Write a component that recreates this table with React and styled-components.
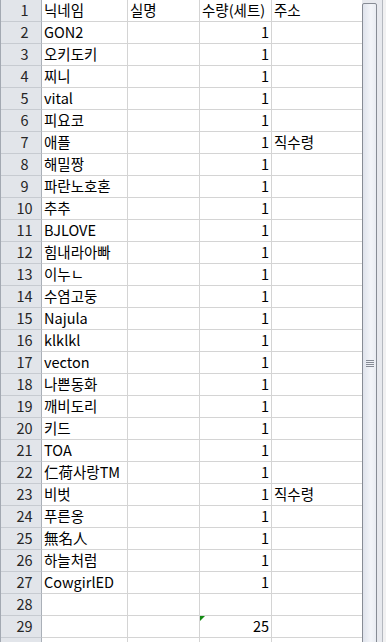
import React from "react";
import styled, { createGlobalStyle } from "styled-components";

const GlobalStyle = createGlobalStyle`
  html, body {
    margin: 0;
    padding: 0;
    background: #fff;
  }
  body {
    font-family: "Noto Sans CJK KR", "Noto Sans", sans-serif;
  }
`;

const Window = styled.div`
  display: flex;
  width: 386px;
  height: 642px;
  overflow: hidden;
`;

const Sheet = styled.div`
  width: 362px;
  height: 642px;
  overflow: hidden;
  border-left: 1px solid #a3a9b2;
  box-sizing: border-box;
`;

const Row = styled.div`
  display: grid;
  grid-template-columns: 41px 86px 72px 72px 90px;
  height: 22px;
`;

const RowHead = styled.div`
  display: flex;
  align-items: flex-end;
  justify-content: center;
  padding: 0 0 2px 7px;
  box-sizing: border-box;
  background: #e2e5ea;
  border-right: 1px solid #aab0b8;
  border-bottom: 1px solid #c7cbd1;
  color: #262626;
  font-size: 14.5px;
  line-height: 18px;
`;

const Cell = styled.div`
  position: relative;
  display: flex;
  align-items: flex-end;
  justify-content: ${(p) => (p.$num ? "flex-end" : "flex-start")};
  padding: ${(p) => (p.$num ? "0 2px 2px 0" : "0 0 2px 2px")};
  box-sizing: border-box;
  border-right: ${(p) => (p.$last ? "none" : "1px solid #d4d4d4")};
  border-bottom: 1px solid #d4d4d4;
  color: #000;
  font-size: 14.5px;
  line-height: 18px;
  white-space: nowrap;
  overflow: hidden;

  /* 수식 오류 표시 (초록 삼각형) */
  ${(p) =>
    p.$flag &&
    `
    &::before {
      content: "";
      position: absolute;
      top: 0;
      left: 0;
      border-top: 5px solid #138a13;
      border-right: 5px solid transparent;
    }
  `}
`;

const ScrollBar = styled.div`
  display: flex;
  width: 24px;
  height: 642px;
`;

const Track = styled.div`
  display: flex;
  flex-direction: column;
  width: 21px;
  padding-top: 3px;
  box-sizing: border-box;
  background: #e7e9ee;
  border-right: 1px solid #b4b8bf;
`;

const Thumb = styled.div`
  display: flex;
  flex-direction: column;
  align-items: center;
  justify-content: center;
  gap: 1px;
  width: 15px;
  height: 720px;
  flex-shrink: 0;
  box-sizing: border-box;
  border: 1px solid #878c95;
  border-radius: 2px;
  background: linear-gradient(to right, #dfe3ec, #f3f5f9 60%, #e9ecf2);
`;

const Grip = styled.div`
  width: 8px;
  height: 1px;
  background: #868b95;
`;

const Edge = styled.div`
  width: 3px;
  background: #f1f1f2;
`;

const rows = [
  ["닉네임", "실명", "수량(세트)", "주소"],
  ["GON2", "", "1", ""],
  ["오키도키", "", "1", ""],
  ["찌니", "", "1", ""],
  ["vital", "", "1", ""],
  ["피요코", "", "1", ""],
  ["애플", "", "1", "직수령"],
  ["해밀짱", "", "1", ""],
  ["파란노호혼", "", "1", ""],
  ["추추", "", "1", ""],
  ["BJLOVE", "", "1", ""],
  ["힘내라아빠", "", "1", ""],
  ["이누ㄴ", "", "1", ""],
  ["수염고둥", "", "1", ""],
  ["Najula", "", "1", ""],
  ["klklkl", "", "1", ""],
  ["vecton", "", "1", ""],
  ["나쁜동화", "", "1", ""],
  ["깨비도리", "", "1", ""],
  ["키드", "", "1", ""],
  ["TOA", "", "1", ""],
  ["仁荷사랑TM", "", "1", ""],
  ["비벗", "", "1", "직수령"],
  ["푸른옹", "", "1", ""],
  ["無名人", "", "1", ""],
  ["하늘처럼", "", "1", ""],
  ["CowgirlED", "", "1", ""],
  ["", "", "", ""],
  ["", "", "25", ""],
];

export default function App() {
  return (
    <>
      <GlobalStyle />
      <Window>
        <Sheet>
          {rows.map(([nick, name, qty, addr], i) => (
            <Row key={i}>
              <RowHead>{i + 1}</RowHead>
              <Cell>{nick}</Cell>
              <Cell>{name}</Cell>
              <Cell $num={i > 0} $flag={i === 28}>
                {qty}
              </Cell>
              <Cell $last>{addr}</Cell>
            </Row>
          ))}
          {/* 화면 아래로 잘리는 다음 행 */}
          <Row>
            <RowHead />
            <Cell />
            <Cell />
            <Cell />
            <Cell $last />
          </Row>
        </Sheet>
        <ScrollBar>
          <Track>
            <Thumb>
              <Grip />
              <Grip />
              <Grip />
              <Grip />
            </Thumb>
          </Track>
          <Edge />
        </ScrollBar>
      </Window>
    </>
  );
}
